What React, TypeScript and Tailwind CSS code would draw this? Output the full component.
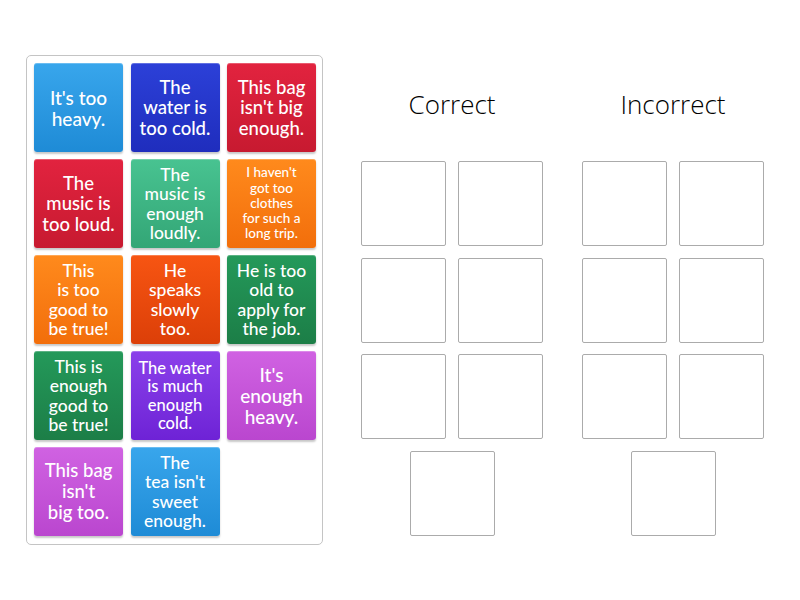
import React from "react";

type Card = {
  lines: string[];
  tone: string;
  size: string;
};

const cards: Card[] = [
  { lines: ["It's too", "heavy."], tone: "from-[#38a6ec] to-[#1e8bd6]", size: "text-[19px] leading-[21px]" },
  { lines: ["The", "water is", "too cold."], tone: "from-[#2c40d8] to-[#1f2dbd]", size: "text-[18.5px] leading-[20.5px]" },
  { lines: ["This bag", "isn't big", "enough."], tone: "from-[#e2233f] to-[#c71a30]", size: "text-[18.5px] leading-[20.5px]" },
  { lines: ["The", "music is", "too loud."], tone: "from-[#e2233f] to-[#c71a30]", size: "text-[18.5px] leading-[20.5px]" },
  { lines: ["The", "music is", "enough", "loudly."], tone: "from-[#48c391] to-[#33a676]", size: "text-[17.5px] leading-[19.3px]" },
  { lines: ["I haven't", "got too", "clothes", "for such a", "long trip."], tone: "from-[#ff8a1c] to-[#f26e0a]", size: "text-[13.5px] leading-[15.2px]" },
  { lines: ["This", "is too", "good to", "be true!"], tone: "from-[#ff8a1c] to-[#f26e0a]", size: "text-[17.5px] leading-[19.3px]" },
  { lines: ["He", "speaks", "slowly", "too."], tone: "from-[#f75512] to-[#dc3f08]", size: "text-[17.5px] leading-[19.3px]" },
  { lines: ["He is too", "old to", "apply for", "the job."], tone: "from-[#24995a] to-[#1c7e47]", size: "text-[17.5px] leading-[19.3px]" },
  { lines: ["This is", "enough", "good to", "be true!"], tone: "from-[#24995a] to-[#1c7e47]", size: "text-[17.5px] leading-[19.3px]" },
  { lines: ["The water", "is much", "enough", "cold."], tone: "from-[#8b40ea] to-[#6e22d6]", size: "text-[16.5px] leading-[18.5px]" },
  { lines: ["It's", "enough", "heavy."], tone: "from-[#d062e2] to-[#ba46cf]", size: "text-[19px] leading-[21px]" },
  { lines: ["This bag", "isn't", "big too."], tone: "from-[#d062e2] to-[#ba46cf]", size: "text-[18.5px] leading-[21px]" },
  { lines: ["The", "tea isn't", "sweet", "enough."], tone: "from-[#38a6ec] to-[#1e8bd6]", size: "text-[17.5px] leading-[19.3px]" },
];

function WordCard({ card }: { card: Card }) {
  return (
    <div
      className={`w-[89px] h-[89px] rounded-[3px] bg-gradient-to-b ${card.tone} shadow-[0_2px_2px_rgba(0,0,0,0.22),inset_0_1px_0_rgba(255,255,255,0.25)] flex items-center justify-center text-center text-white font-medium ${card.size}`}
    >
      <div>
        {card.lines.map((l, i) => (
          <div key={i}>{l}</div>
        ))}
      </div>
    </div>
  );
}

function Slot() {
  return <div className="w-[85px] h-[85px] border border-[#ababab] rounded-[2px] bg-white" />;
}

function Group({ title }: { title: string }) {
  return (
    <div className="w-[182px] flex flex-col items-center">
      <div className="mt-[88px] h-[32px] leading-[32px] text-[26px] text-black font-light font-['Open_Sans',sans-serif]">{title}</div>
      <div className="mt-[41px] grid grid-cols-[85px_85px] gap-x-[11.5px] gap-y-[11.5px]">
        {[0, 1, 2, 3, 4, 5].map((i) => (
          <Slot key={i} />
        ))}
      </div>
      <div className="mt-[11.5px]">
        <Slot />
      </div>
    </div>
  );
}

export default function App() {
  return (
    <div className="w-[800px] h-[600px] bg-white flex pl-[26px] pt-[55px] font-['Lato','Noto_Sans',sans-serif]">
      {/* Card pool */}
      <div className="w-[297px] h-[490px] border border-[#c4c4c4] rounded-[5px] p-[7px] self-start">
        <div className="grid grid-cols-[89px_89px_89px] gap-x-[7.5px] gap-y-[7px]">
          {cards.map((c, i) => (
            <WordCard key={i} card={c} />
          ))}
        </div>
      </div>

      {/* Answer groups */}
      <div className="flex gap-[39px] ml-[38px] -mt-[55px]">
        <Group title="Correct" />
        <Group title="Incorrect" />
      </div>
    </div>
  );
}
